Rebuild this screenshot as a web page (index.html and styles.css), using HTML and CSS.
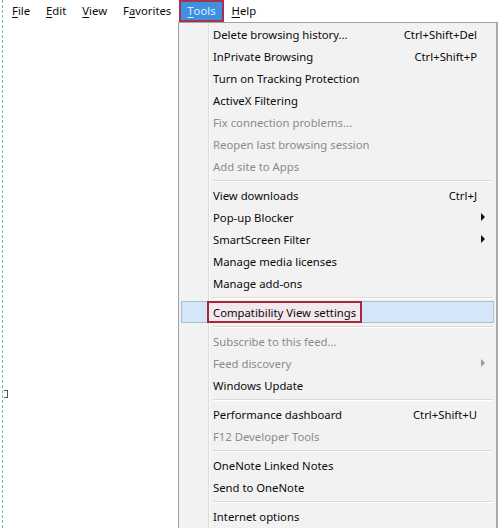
FILE: index.html
```html
<!DOCTYPE html>
<html>
<head>
<meta charset="utf-8">
<link rel="stylesheet" href="styles.css">
</head>
<body>
<div class="page">
  <div class="menubar">
    <span class="mb-item"><u>F</u>ile</span>
    <span class="mb-item"><u>E</u>dit</span>
    <span class="mb-item"><u>V</u>iew</span>
    <span class="mb-item">F<u>a</u>vorites</span>
    <span class="mb-item active"><u>T</u>ools</span>
    <span class="mb-item"><u>H</u>elp</span>
  </div>
  <span class="mark"></span>
  <div class="menu">
    <div class="row"><span class="label">Delete browsing history...</span><span class="key">Ctrl+Shift+Del</span></div>
    <div class="row"><span class="label">InPrivate Browsing</span><span class="key">Ctrl+Shift+P</span></div>
    <div class="row"><span class="label">Turn on Tracking Protection</span></div>
    <div class="row"><span class="label">ActiveX Filtering</span></div>
    <div class="row disabled"><span class="label">Fix connection problems...</span></div>
    <div class="row disabled"><span class="label">Reopen last browsing session</span></div>
    <div class="row disabled"><span class="label">Add site to Apps</span></div>
    <div class="sep"></div>
    <div class="row"><span class="label">View downloads</span><span class="key">Ctrl+J</span></div>
    <div class="row sub"><span class="label">Pop-up Blocker</span></div>
    <div class="row sub"><span class="label">SmartScreen Filter</span></div>
    <div class="row"><span class="label">Manage media licenses</span></div>
    <div class="row"><span class="label">Manage add-ons</span></div>
    <div class="sep"></div>
    <div class="row hl"><span class="label boxed">Compatibility View settings</span></div>
    <div class="sep"></div>
    <div class="row disabled"><span class="label">Subscribe to this feed...</span></div>
    <div class="row disabled sub"><span class="label">Feed discovery</span></div>
    <div class="row"><span class="label">Windows Update</span></div>
    <div class="sep"></div>
    <div class="row"><span class="label">Performance dashboard</span><span class="key">Ctrl+Shift+U</span></div>
    <div class="row disabled"><span class="label">F12 Developer Tools</span></div>
    <div class="sep"></div>
    <div class="row"><span class="label">OneNote Linked Notes</span></div>
    <div class="row"><span class="label">Send to OneNote</span></div>
    <div class="sep"></div>
    <div class="row"><span class="label">Internet options</span></div>
  </div>
</div>
</body>
</html>
```
FILE: styles.css
```css
html, body {
  margin: 0;
  padding: 0;
  background: #ffffff;
}
body {
  font-family: "Noto Sans", "Liberation Sans", sans-serif;
  font-size: 11.3px;
  color: #0a0a0a;
  width: 501px;
  height: 528px;
  overflow: hidden;
}
.page {
  position: relative;
  height: 528px;
  margin-left: 2px;
  border-left: 1px dashed #79b7b3;
}
.menubar {
  display: flex;
  height: 22px;
  padding-left: 1px;
  align-items: stretch;
}
.mb-item {
  display: flex;
  align-items: center;
  padding: 0 6px 1px 6px;
  border: 2px solid transparent;
  line-height: 18px;
}
.mb-item u {
  text-decoration-thickness: 1px;
  text-underline-offset: 2px;
}
.mb-item.active {
  background: #3f90e0;
  border-color: #a5334c;
  color: #dcefff;
}
.mark {
  position: absolute;
  left: 1px;
  top: 390px;
  width: 3px;
  height: 6px;
  border: 1px solid #555;
  border-left: none;
}
.menu {
  position: absolute;
  left: 175px;
  top: 22px;
  width: 320px;
  height: 520px;
  border: 1px solid #a3a3a3;
  border-right: 2px solid #a9a9a9;
  box-sizing: border-box;
  padding: 0 2px;
  background: linear-gradient(to right, #f3f2f3 0, #f3f2f3 29px, #dcdcdc 29px, #dcdcdc 30px, #fbfbfb 30px, #fbfbfb 31px, #f3f2f3 31px);
}
.row {
  display: flex;
  align-items: center;
  height: 22px;
  padding: 0 17px 0 32px;
  position: relative;
  color: #0a0a0a;
}
.row .label {
  flex: 1;
  white-space: nowrap;
}
.row .key {
  white-space: nowrap;
}
.row.disabled {
  color: #8a8a8a;
}
.row.sub::after {
  content: "";
  position: absolute;
  right: 9px;
  top: 7px;
  border-left: 4px solid #111;
  border-top: 4px solid transparent;
  border-bottom: 4px solid transparent;
}
.row.disabled.sub::after {
  border-left-color: #9a9a9a;
}
.sep {
  height: 7px;
  margin-left: 32px;
  margin-right: 1px;
  background: linear-gradient(to bottom, transparent 3px, #d9d9d9 3px, #d9d9d9 4px, #ffffff 4px, #ffffff 5px, transparent 5px);
}
.row.hl {
  background: #d4e6f8;
  border: 1px solid #a6bfd8;
  box-sizing: border-box;
  padding-left: 25px;
}
.row .label.boxed {
  flex: 0 0 auto;
  align-self: stretch;
  display: flex;
  align-items: center;
  padding: 0 4px;
  border: 2px solid #a2283f;
  margin-top: -1px;
  margin-bottom: -1px;
  background: #f4e8ee;
}
```
